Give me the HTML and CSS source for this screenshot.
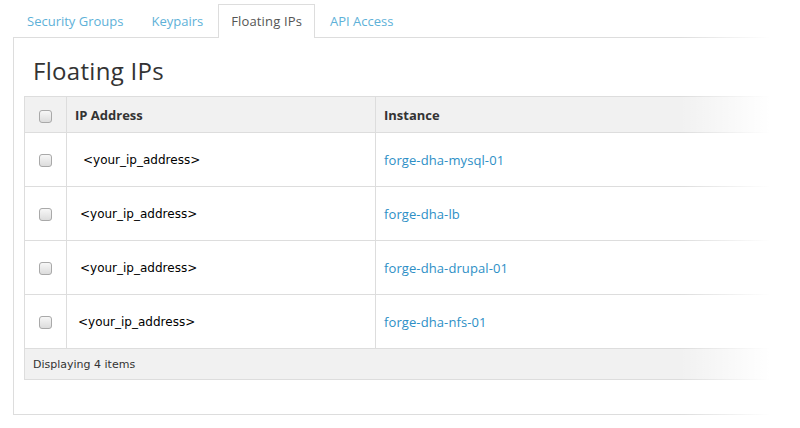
FILE: index.html
```html
<!DOCTYPE html>
<html>
<head>
<meta charset="utf-8">
<link rel="stylesheet" href="styles.css">
</head>
<body>
<div class="page">
  <ul class="tabs">
    <li class="tab"><a>Security Groups</a></li>
    <li class="tab"><a>Keypairs</a></li>
    <li class="tab active"><a>Floating IPs</a></li>
    <li class="tab"><a>API Access</a></li>
  </ul>
  <div class="panel">
    <h2 class="title">Floating IPs</h2>
    <table class="grid">
      <thead>
        <tr>
          <th class="c-check"><span class="cb"></span></th>
          <th class="c-ip">IP Address</th>
          <th class="c-inst">Instance</th>
        </tr>
      </thead>
      <tbody>
        <tr>
          <td class="c-check"><span class="cb"></span></td>
          <td class="c-ip ind-3">&lt;your_ip_address&gt;</td>
          <td class="c-inst"><a class="link">forge-dha-mysql-01</a></td>
        </tr>
        <tr>
          <td class="c-check"><span class="cb"></span></td>
          <td class="c-ip ind-2">&lt;your_ip_address&gt;</td>
          <td class="c-inst"><a class="link">forge-dha-lb</a></td>
        </tr>
        <tr>
          <td class="c-check"><span class="cb"></span></td>
          <td class="c-ip ind-2">&lt;your_ip_address&gt;</td>
          <td class="c-inst"><a class="link">forge-dha-drupal-01</a></td>
        </tr>
        <tr>
          <td class="c-check"><span class="cb"></span></td>
          <td class="c-ip ind-0">&lt;your_ip_address&gt;</td>
          <td class="c-inst"><a class="link">forge-dha-nfs-01</a></td>
        </tr>
      </tbody>
      <tfoot>
        <tr>
          <td colspan="3" class="foot">Displaying 4 items</td>
        </tr>
      </tfoot>
    </table>
  </div>
  <div class="fade"></div>
</div>
</body>
</html>
```
FILE: styles.css
```css
html, body {
  margin: 0;
  padding: 0;
  background: #fff;
  overflow: hidden;
}
.page {
  position: relative;
  width: 800px;
  height: 428px;
  overflow: hidden;
  font-family: "Open Sans", "DejaVu Sans", sans-serif;
}
.tabs {
  list-style: none;
  margin: 0;
  padding: 4px 0 0 14px;
  display: flex;
  height: 33px;
  box-sizing: content-box;
}
.tab {
  margin-right: 2px;
  border: 1px solid transparent;
  border-bottom: none;
  height: 33px;
  box-sizing: border-box;
}
.tab a {
  display: block;
  padding: 7px 12px 0 12px;
  font-size: 13px;
  line-height: 18px;
  color: #5eb1d8;
}
.tab.active {
  border-color: #ddd;
  background: #fff;
  height: 34px;
  position: relative;
  z-index: 1;
}
.tab.active a {
  color: #555;
  letter-spacing: 0.15px;
}
.panel {
  margin-left: 13px;
  width: 820px;
  height: 378px;
  border: 1px solid #ddd;
  box-sizing: border-box;
  padding: 0 0 0 10px;
}
.title {
  margin: 0;
  padding: 17px 0 0 9px;
  height: 58px;
  box-sizing: border-box;
  font-weight: 400;
  font-size: 24px;
  line-height: 32px;
  color: #333;
  letter-spacing: 0.3px;
}
.grid {
  border-collapse: collapse;
  width: 790px;
  font-family: "DejaVu Sans", Verdana, sans-serif;
  font-size: 12px;
  color: #000;
}
.grid th, .grid td {
  border: 1px solid #ddd;
  text-align: left;
  vertical-align: middle;
  padding: 0 8px;
}
.grid thead th {
  background: #f1f1f1;
  height: 35px;
  font-family: "Open Sans", sans-serif;
  font-weight: 700;
  font-size: 13px;
  color: #333;
}
.grid tbody td {
  height: 53px;
}
.c-check {
  width: 25px;
  text-align: center !important;
}
.c-ip {
  width: 284px;
}
.ind-3 { padding-left: 16px !important; }
.ind-2 { padding-left: 13px !important; }
.ind-0 { padding-left: 11px !important; }
.cb {
  display: inline-block;
  width: 11px;
  height: 11px;
  border: 1px solid #a9a9a9;
  border-radius: 3px;
  background: linear-gradient(#f7f7f7, #dcdcdc);
  vertical-align: middle;
}
.link {
  font-family: "Open Sans", sans-serif;
  font-size: 13px;
  color: #2d8fc6;
  letter-spacing: 0.1px;
}
.grid tfoot td.foot {
  background: #f1f1f1;
  height: 30px;
  font-size: 11px;
  color: #333;
  padding-left: 8px;
}
.fade {
  position: absolute;
  top: 0;
  right: 0;
  width: 120px;
  height: 100%;
  background: linear-gradient(to right, rgba(255,255,255,0), #fff 75%);
  z-index: 2;
}
```
